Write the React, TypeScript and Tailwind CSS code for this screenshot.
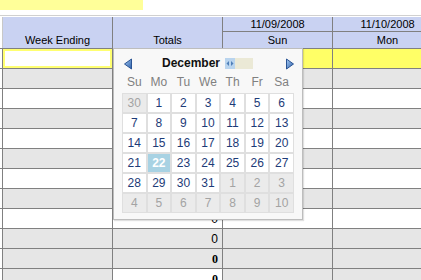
import React from "react";

const rows: { left: string; tot: string; day: string; val?: string; bold?: boolean }[] = [
  { left: "input", tot: "bg-white", day: "bg-[#ffff66]" },
  { left: "bg-[#e6e6e6]", tot: "bg-[#e6e6e6]", day: "bg-[#e6e6e6]" },
  { left: "bg-white", tot: "bg-white", day: "bg-white" },
  { left: "bg-[#e6e6e6]", tot: "bg-[#e6e6e6]", day: "bg-[#e6e6e6]" },
  { left: "bg-white", tot: "bg-white", day: "bg-white" },
  { left: "bg-[#e6e6e6]", tot: "bg-[#e6e6e6]", day: "bg-[#e6e6e6]" },
  { left: "bg-white", tot: "bg-white", day: "bg-white" },
  { left: "bg-[#e6e6e6]", tot: "bg-[#e6e6e6]", day: "bg-[#e6e6e6]" },
  { left: "bg-white", tot: "bg-white", day: "bg-white", val: "0" },
  { left: "bg-[#e6e6e6]", tot: "bg-[#e6e6e6]", day: "bg-[#e6e6e6]", val: "0" },
  { left: "bg-[#e6e6e6]", tot: "bg-[#e6e6e6]", day: "bg-[#e6e6e6]", val: "0", bold: true },
  { left: "bg-[#e6e6e6]", tot: "bg-white", day: "bg-[#e6e6e6]", val: "0", bold: true },
];

const weeks = [
  [30, 1, 2, 3, 4, 5, 6],
  [7, 8, 9, 10, 11, 12, 13],
  [14, 15, 16, 17, 18, 19, 20],
  [21, 22, 23, 24, 25, 26, 27],
  [28, 29, 30, 31, 1, 2, 3],
  [4, 5, 6, 7, 8, 9, 10],
];

function isOut(w: number, i: number) {
  if (w === 0 && i === 0) return true;
  if (w === 4 && i >= 4) return true;
  if (w === 5) return true;
  return false;
}

function Arrow({ dir }: { dir: "l" | "r" }) {
  return (
    <svg width="10" height="12" viewBox="0 0 10 12">
      <defs>
        <linearGradient id={"g" + dir} x1="0" y1="0" x2="1" y2="1">
          <stop offset="0" stopColor="#a9cdf5" />
          <stop offset="1" stopColor="#2b5ea8" />
        </linearGradient>
      </defs>
      {dir === "l" ? (
        <path d="M8.5 1 L1.5 6 L8.5 11 Z" fill={"url(#g" + dir + ")"} stroke="#2a5494" strokeWidth="1" strokeLinejoin="round" />
      ) : (
        <path d="M1.5 1 L8.5 6 L1.5 11 Z" fill={"url(#g" + dir + ")"} stroke="#2a5494" strokeWidth="1" strokeLinejoin="round" />
      )}
    </svg>
  );
}

function Calendar() {
  return (
    <div
      className="absolute left-[113px] top-[48px] w-[190px] h-[172px] bg-[#f8f8f8] border border-[#bdbdbd] shadow-[1px_1px_1px_rgba(0,0,0,0.12)] flex flex-col px-[8px]"
      style={{ fontFamily: '"Liberation Sans", Arial, sans-serif' }}
    >
      <div className="h-[28px] flex items-center relative">
        <div className="absolute left-[1px] top-[9px]">
          <Arrow dir="l" />
        </div>
        <div className="absolute left-[40px] top-[7px] flex items-center">
          <span className="text-[12px] font-bold leading-[14px] text-[#111]">December</span>
          <span className="ml-[5px] w-[10px] h-[11px] bg-[#b9d4ee] flex items-center justify-center">
            <svg width="8" height="7" viewBox="0 0 8 7">
              <path d="M3 1 L0.5 3.5 L3 6 Z" fill="#4f7fb8" />
              <path d="M5 1 L7.5 3.5 L5 6 Z" fill="#4f7fb8" />
            </svg>
          </span>
          <span className="w-[18px] h-[11px] bg-[#ebe9d6]" />
        </div>
        <div className="absolute left-[163px] top-[9px]">
          <Arrow dir="r" />
        </div>
      </div>
      <div className="h-[10px] grid grid-cols-7 px-[1px] gap-x-[2px] items-center">
        {["Su", "Mo", "Tu", "We", "Th", "Fr", "Sa"].map((d) => (
          <div key={d} className="text-center text-[12px] leading-[10px] text-[#808080]">
            {d}
          </div>
        ))}
      </div>
      <div className="mt-[6px] w-[172px] bg-[#dfdfdf] p-[1px] grid grid-cols-7 gap-[2px]">
        {weeks.map((w, wi) =>
          w.map((d, i) => {
            const out = isOut(wi, i);
            const sel = wi === 3 && i === 1;
            const cls = sel
              ? "bg-[#a8d2e3] text-white font-bold"
              : out
              ? "bg-[#ebebeb] text-[#a3a3a3]"
              : "bg-white text-[#1d3b78]";
            return (
              <div key={wi + "-" + i} className={"h-[18px] flex items-center justify-center text-[12px] leading-[14px] " + cls}>
                {d}
              </div>
            );
          })
        )}
      </div>
    </div>
  );
}

export default function App() {
  return (
    <div
      className="relative w-[421px] h-[280px] overflow-hidden bg-white text-black"
      style={{ fontFamily: '"Liberation Sans", Arial, sans-serif' }}
    >
      <div className="h-[10px] w-[143px] bg-[#ffff99]" />
      <div className="h-[5px]" />
      <div className="h-px w-full bg-[#d0d0d0]" />
      <div className="h-px" />
      {/* header */}
      <div className="flex h-[32px] border-b border-[#808080] w-[460px]">
        <div className="w-[2px] shrink-0" />
        <div className="w-[111px] shrink-0 border-l border-[#c8c8c8] border-r border-r-[#808080] bg-[#c9d2f2] flex items-end justify-center pb-[1px] text-[11px] leading-[13px]">
          Week Ending
        </div>
        <div className="w-[110px] shrink-0 border-r border-[#808080] bg-[#c9d2f2] flex items-end justify-center pb-[1px] text-[11px] leading-[13px]">
          Totals
        </div>
        {[
          ["11/09/2008", "Sun"],
          ["11/10/2008", "Mon"],
        ].map(([date, day]) => (
          <div key={day} className="w-[110px] shrink-0 border-r border-[#808080] bg-[#c9d2f2] flex flex-col">
            <div className="h-[15px] border-b border-[#808080] flex items-end justify-center text-[11px] leading-[13px]">
              {date}
            </div>
            <div className="h-[16px] flex items-end justify-center pb-[1px] text-[11px] leading-[13px]">{day}</div>
          </div>
        ))}
      </div>
      {/* body rows */}
      {rows.map((r, i) => (
        <div key={i} className="flex h-[20px] border-b border-[#808080] w-[460px]">
          <div className="w-[2px] shrink-0" />
          {r.left === "input" ? (
            <div className="w-[111px] shrink-0 border-l border-[#808080] border-r border-r-[#808080] bg-white">
              <div className="h-full border-2 border-[#ffff70] bg-white" />
            </div>
          ) : (
            <div className={"w-[111px] shrink-0 border-l border-[#808080] border-r " + r.left} />
          )}
          <div className={"w-[110px] shrink-0 border-r border-[#808080] flex items-center justify-end pr-[4px] text-[12px] leading-[14px] " + r.tot}>
            {r.val ? (
              <span
                className={r.bold ? "font-bold" : ""}
                style={r.bold ? { fontFamily: '"Liberation Serif", "Times New Roman", serif' } : undefined}
              >
                {r.val}
              </span>
            ) : null}
          </div>
          <div className={"w-[110px] shrink-0 border-r border-[#808080] " + r.day} />
          <div className={"w-[110px] shrink-0 border-r border-[#808080] " + r.day} />
        </div>
      ))}
      <Calendar />
    </div>
  );
}
